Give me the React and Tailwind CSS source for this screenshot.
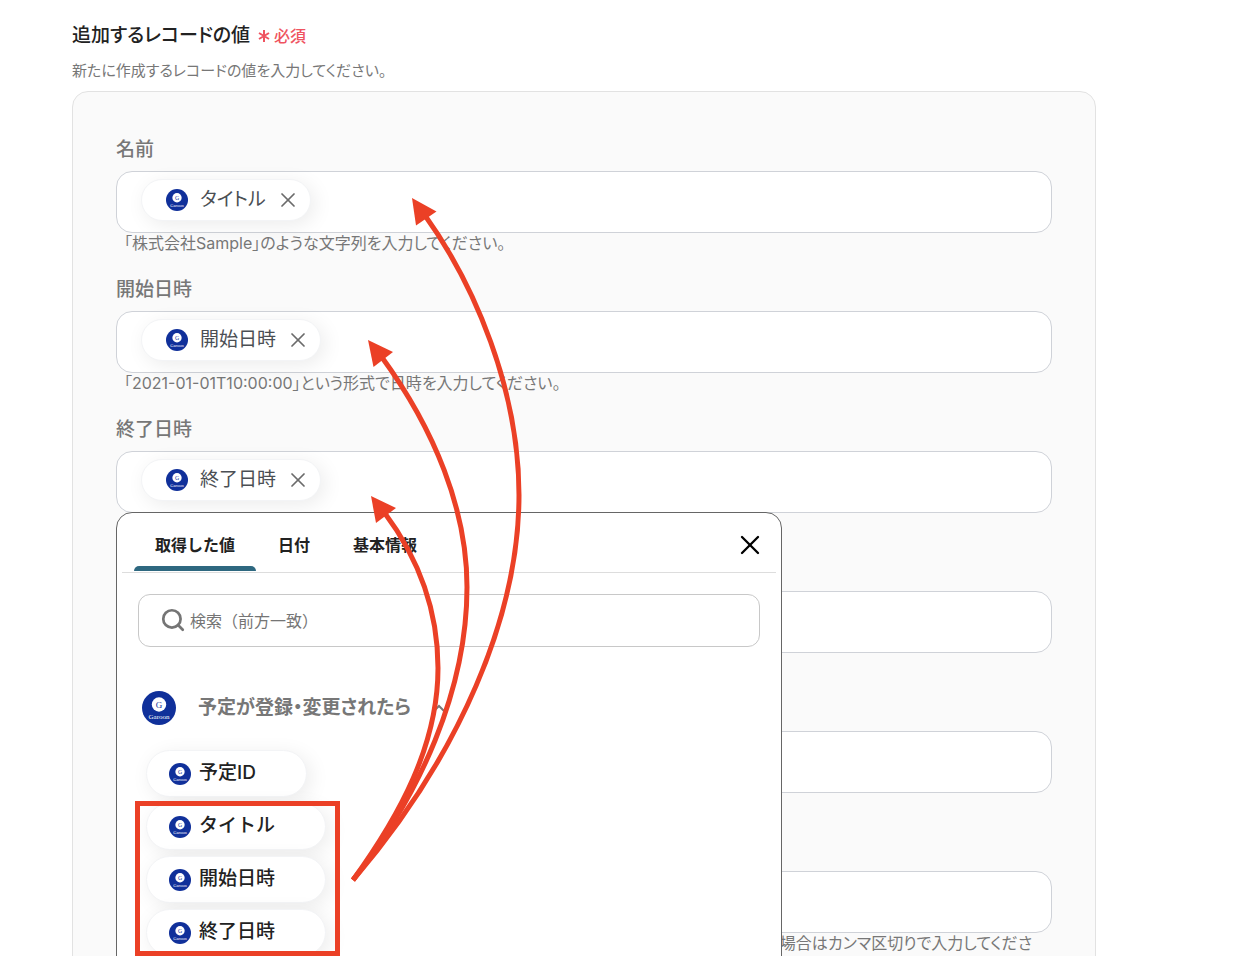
import { useState } from 'react';
import { Search, X } from 'lucide-react';

const fields = [
  { id: 'name', label: '名前', chip: 'タイトル', help: '「株式会社Sample」のような文字列を入力してください。' },
  { id: 'start', label: '開始日時', chip: '開始日時', help: '「2021-01-01T10:00:00」という形式で日時を入力してください。' },
  { id: 'end', label: '終了日時', chip: '終了日時', picker: true },
  { id: 'place', label: '場所' },
  { id: 'memo', label: 'メモ' },
  {
    id: 'members',
    label: '参加者',
    alignEnd: true,
    help: (
      <>
        複数の値を入力する場合はカンマ区切りで入力してくださ
        <br />
        い。
      </>
    ),
  },
];

const tabs = ['取得した値', '日付', '基本情報'];

const outputs = ['予定ID', 'タイトル', '開始日時', '終了日時'];

function GaroonLogo({ className }) {
  return (
    <svg viewBox="0 0 34 34" className={className} aria-hidden="true">
      <circle cx="17" cy="17" r="17" fill="#10309a" />
      <circle cx="17" cy="13.5" r="7.2" fill="#fff" />
      <text x="17" y="16.5" textAnchor="middle" fontFamily="Liberation Serif, serif" fontSize="9" fill="#10309a">
        G
      </text>
      <text x="17" y="28" textAnchor="middle" fontFamily="Liberation Serif, serif" fontSize="7" fill="#fff">
        Garoon
      </text>
    </svg>
  );
}

function ValueChip({ label, onRemove }) {
  return (
    <span className="flex h-[42px] shrink-0 items-center rounded-full border border-gray-100 bg-white pl-6 pr-2.5 shadow-[4px_4px_20px_rgba(0,0,0,0.08)]">
      <GaroonLogo className="h-[22px] w-[22px]" />
      <span className="ml-3 text-[19px] leading-6 text-[#4b4f54]">{label}</span>
      <button type="button" onClick={onRemove} aria-label={`${label}を削除`} className="ml-2.5 text-[#6b6b6b]">
        <X className="h-6 w-6" strokeWidth={1.75} />
      </button>
    </span>
  );
}

function ValuePicker({ onClose }) {
  const [tab, setTab] = useState(tabs[0]);

  return (
    <div className="absolute left-0 top-full z-10 -mt-px h-[560px] w-[666px] max-w-full rounded-2xl border border-[#666] bg-white px-[5px]">
      <div className="flex items-end gap-px border-b border-[#ddd] pl-3 pr-2.5">
        {tabs.map((name) => (
          <button
            key={name}
            type="button"
            onClick={() => setTab(name)}
            className="relative h-[59px] px-[21px] pb-0.5 pt-1.5 text-base font-bold leading-6 text-[#222] [font-feature-settings:normal]"
          >
            {name}
            {tab === name && (
              <span className="absolute inset-x-0 bottom-px h-[5px] rounded-t-md bg-[#2e6880]" aria-hidden="true" />
            )}
          </button>
        ))}
        <button type="button" onClick={onClose} aria-label="閉じる" className="mb-[11px] ml-auto text-black">
          <X className="h-8 w-8" strokeWidth={1.75} />
        </button>
      </div>

      <div className="px-4">
        <label className="mt-[21px] flex h-[53px] items-center rounded-xl border border-[#c8c8c8] pl-[21px] text-[#757575]">
          <Search className="mb-0.5 h-[26px] w-[26px]" strokeWidth={2.5} />
          <input
            type="search"
            aria-label="検索"
            placeholder="検索（前方一致）"
            className="ml-1 min-w-0 flex-1 bg-transparent text-base outline-none [font-feature-settings:normal] placeholder:text-[#757575]"
          />
        </label>

        <button type="button" className="mt-11 flex items-center pl-1 text-[#777]">
          <GaroonLogo className="h-[34px] w-[34px]" />
          <span className="ml-[22px] text-[19px] font-bold">予定が登録・変更されたら</span>
          <svg viewBox="0 0 12 12" className="ml-[22px] h-3 w-3" fill="none" stroke="currentColor" strokeWidth="2" aria-hidden="true">
            <path d="M1 9 6 4l5 5" />
          </svg>
        </button>

        <ul className="mt-[25px] flex flex-col items-start gap-[6px] pl-2">
          {outputs.map((name) => (
            <li key={name}>
              <button
                type="button"
                className="flex h-[47px] items-center rounded-full border border-gray-100 bg-white pl-[22px] pr-[50px] text-[#222] shadow-[4px_4px_20px_rgba(0,0,0,0.08)]"
              >
                <GaroonLogo className="h-[22px] w-[22px]" />
                <span className="ml-2 text-[19px] font-medium [font-feature-settings:normal]">{name}</span>
              </button>
            </li>
          ))}
        </ul>
      </div>
    </div>
  );
}

function Field({ field }) {
  const [chip, setChip] = useState(field.chip);
  const [open, setOpen] = useState(Boolean(field.picker));

  return (
    <div className="h-[140px]">
      <label htmlFor={field.id} className="block pb-[7px] text-[19px] font-medium leading-7 text-[#777]">
        {field.label}
      </label>
      <div className="relative">
        <div className="flex h-[62px] items-center rounded-2xl border border-[#cfd2d8] bg-white pb-1 pl-6 pr-4">
          {chip && <ValueChip label={chip} onRemove={() => setChip(null)} />}
          <input id={field.id} type="text" className="h-full min-w-0 flex-1 bg-transparent outline-none" />
        </div>
        {open && <ValuePicker onClose={() => setOpen(false)} />}
      </div>
      <p className={field.alignEnd ? 'pr-5 text-right text-base leading-5' : 'pl-2 text-base leading-5'}>
        {field.help}
      </p>
    </div>
  );
}

// Callouts from the output list to the fields they fill
function Callouts() {
  return (
    <svg width="560" height="960" className="pointer-events-none absolute left-0 top-0 z-20" fill="none" aria-hidden="true">
      <g stroke="#eb4026" strokeWidth="5">
        <rect x="137.5" y="803.5" width="200" height="150" />
        <path d="M353 880C460 755 519 615 519 495C519 390 475 285 424 214" />
        <path d="M353 880C420 795 467 690 467 587C467 510 435 430 381 356" />
        <path d="M353 880C400 815 438 745 438 668C438 612 420 560 384 512" />
      </g>
      <g fill="#eb4026">
        <path d="M412 198 436.500 211.500 416 225.500Z" />
        <path d="M368 340 393 352 373.500 367Z" />
        <path d="M371 496 396 508 376 523Z" />
      </g>
    </svg>
  );
}

export default function App() {
  return (
    <main className="relative h-screen overflow-hidden bg-white px-[72px] pt-[22px] font-['Inter','Noto_Sans_CJK_JP',sans-serif] text-[#777] [font-feature-settings:'palt']">
      <div className="max-w-5xl">
        <h1 className="flex items-center text-[19px] font-medium leading-7 text-[#222]">
          追加するレコードの値
          <span className="ml-2 flex items-center gap-1 text-base leading-6 text-[#ef5360]">
            <svg viewBox="0 0 12 12" className="h-3 w-3" stroke="currentColor" strokeWidth="2" aria-hidden="true">
              <path d="M6 0v12M1 3l10 6M11 3 1 9" />
            </svg>
            必須
          </span>
        </h1>
        <p className="mt-2.5 text-[15px] leading-[22px]">新たに作成するレコードの値を入力してください。</p>
        <section className="mt-[9px] rounded-2xl border border-[#e2e2e2] bg-[#fafafa] px-[43px] pt-11">
          {fields.map((field) => (
            <Field key={field.id} field={field} />
          ))}
        </section>
      </div>
      <Callouts />
    </main>
  );
}
